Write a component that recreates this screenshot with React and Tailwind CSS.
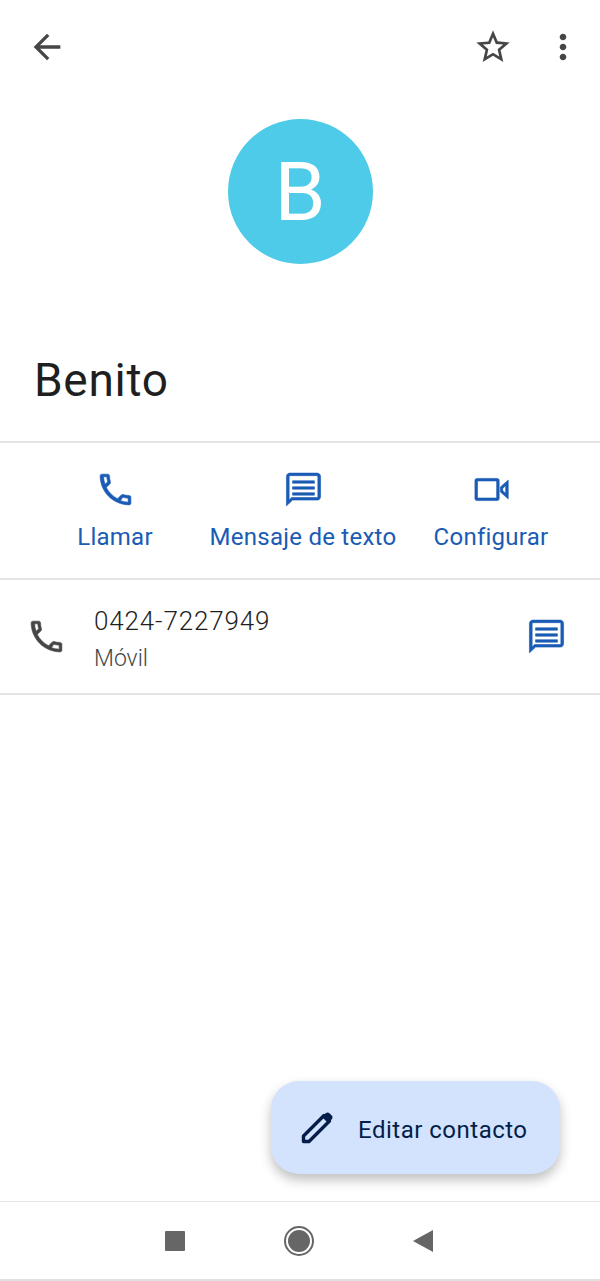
const PHONE = "M6.9 4.6c.06.95.22 1.95.5 2.85l-1.5 1.5c-.5-1.4-.78-2.85-.88-4.35zM16.25 16.6c.95.28 1.95.44 3.15.5v2.3c-1.6-.1-3.05-.38-4.45-.88zM7.5 3H4c-.55 0-1 .45-1 1 0 9.39 7.61 17 17 17 .55 0 1-.45 1-1v-3.49c0-.55-.45-1-1-1-1.24 0-2.45-.2-3.57-.57-.1-.04-.21-.05-.31-.05-.26 0-.51.1-.71.29l-2.2 2.2c-2.83-1.45-5.15-3.76-6.59-6.59l2.2-2.2c.28-.28.36-.67.25-1.02C8.7 6.45 8.5 5.25 8.5 4c0-.55-.45-1-1-1z"
const MESSAGE = "M20 2.4H4C2.9 2.4 2 3.3 2 4.4v17.2l3.6-3.4H20c1.1 0 2-.9 2-2V4.4c0-1.1-.9-2-2-2zm.4 13.8c0 .3-.2.5-.5.5H5l-1.4 1.4V4.4c0-.3.2-.5.5-.5h15.8c.3 0 .5.2.5.5zM5.6 6.9h12.8v1.4H5.6zM5.6 10.4h12.8v1.4H5.6zM5.6 13.9h12.8v1.4H5.6z"
const VIDEO = "M3.5 5.5h11.8c.7 0 1.2.5 1.2 1.2v10.6c0 .7-.5 1.2-1.2 1.2H3.5c-.7 0-1.2-.5-1.2-1.2V6.7c0-.7.5-1.2 1.2-1.2zM3.8 7v10h11.2V7zM21.8 6.5v11l-4.6-4v-3zM20.3 9.8l-1.7 1.4v1.6l1.7 1.4z"

const Icon = ({ d, className, bold }) => (
    <svg viewBox="0 0 24 24" fill="currentColor" fillRule="evenodd" stroke={bold ? "currentColor" : "none"} strokeWidth={bold ? 0.35 : 0} className={className}>
        <path d={d} />
    </svg>
)

const Action = ({ d, label }) => (
    <div className="w-[188px] flex flex-col items-center">
        <Icon d={d} bold className="w-[41px] h-[41px] text-[#1a5bb5]" />
        <span className="mt-[12px] text-[24px] leading-[30px] tracking-[0.25px] text-[#1a5bb5] whitespace-nowrap">{label}</span>
    </div>
)

export default function App() {
    return (
        <div className="h-[1281px] flex flex-col bg-white font-['Roboto',sans-serif] overflow-hidden">

            {/* Top bar */}
            <div className="h-[94px] flex items-center pl-[27px] pr-[17px] text-[#444746] shrink-0">
                <Icon d="M20 11H7.83l5.59-5.59L12 4l-8 8 8 8 1.41-1.41L7.83 13H20v-2z" className="w-[40px] h-[40px]" />
                <div className="ml-auto flex items-center gap-[30px]">
                    <Icon d="M22 9.24l-7.19-.62L12 2 9.19 8.63 2 9.24l5.46 4.73L5.82 21 12 17.27 18.18 21l-1.63-7.03L22 9.24zM12 15.4l-3.76 2.27 1-4.28-3.32-2.88 4.38-.38L12 6.1l1.71 4.04 4.38.38-3.32 2.88 1 4.28L12 15.4z" className="w-[40px] h-[40px]" />
                    <Icon d="M12 8c1.1 0 2-.9 2-2s-.9-2-2-2-2 .9-2 2 .9 2 2 2zm0 2c-1.1 0-2 .9-2 2s.9 2 2 2 2-.9 2-2-.9-2-2-2zm0 6c-1.1 0-2 .9-2 2s.9 2 2 2 2-.9 2-2-.9-2-2-2z" className="w-[40px] h-[40px]" />
                </div>
            </div>

            {/* Avatar */}
            <div className="mt-[25px] flex justify-center shrink-0">
                <div className="w-[145px] h-[145px] rounded-full bg-[#4ecbe8] flex items-center justify-center text-white text-[82px] leading-none font-normal">B</div>
            </div>

            {/* Name */}
            <div className="h-[179px] pl-[34px] pt-[85px] text-[46px] leading-[62px] tracking-[0.7px] text-[#1f1f1f] border-b-2 border-[#e4e4e4] shrink-0">Benito</div>

            {/* Actions */}
            <div className="h-[137px] flex pl-[21px] pt-[26px] border-b-2 border-[#e4e4e0] shrink-0">
                <Action d={PHONE} label="Llamar" />
                <Action d={MESSAGE} label="Mensaje de texto" />
                <Action d={VIDEO} label="Configurar" />
            </div>

            {/* Phone row */}
            <div className="h-[115px] flex items-center pl-[26px] pr-[33px] border-b-2 border-[#e4e4e4] shrink-0">
                <Icon d={PHONE} bold className="w-[41px] h-[41px] text-[#444746]" />
                <div className="ml-[27px] pt-[3px]">
                    <p className="text-[26px] leading-[34px] tracking-[0.85px] font-light text-[#1f1f1f]">0424-7227949</p>
                    <p className="mt-[7px] text-[23px] leading-[28px] font-light text-[#444746]">Móvil</p>
                </div>
                <Icon d={MESSAGE} bold className="ml-auto w-[41px] h-[41px] text-[#1a5bb5]" />
            </div>

            {/* Edit button */}
            <div className="flex-1 flex items-end justify-end pr-[40px] pb-[27px]">
                <div className="w-[289px] h-[93px] rounded-[28px] bg-[#d3e3fd] shadow-[0_6px_12px_rgba(0,0,0,0.25)] flex items-center pl-[26px]">
                    <svg viewBox="0 0 40 40" className="w-[40px] h-[40px] text-[#041e49]" fill="none">
                        <path d="M6.5 33.5V28L27 7.5l5.5 5.5L12 33.5z" stroke="currentColor" strokeWidth="3.4" strokeLinejoin="round" />
                        <path d="M25 9l3.5-3.5a3 3 0 0 1 4.2 0l1.8 1.8a3 3 0 0 1 0 4.2L31 15z" fill="currentColor" />
                    </svg>
                    <span className="ml-[21px] pt-[4px] text-[24px] leading-[32px] tracking-[0.5px] text-[#041e49] whitespace-nowrap">Editar contacto</span>
                </div>
            </div>

            {/* Nav bar */}
            <div className="h-[80px] flex items-center justify-center gap-[99px] pr-[2px] border-t border-[#e8e8e8] border-b-2 border-b-[#e0e0e0] shrink-0">
                <div className="w-[20px] h-[20px] bg-[#666666] rounded-[1px]"></div>
                <div className="w-[30px] h-[30px] rounded-full border-2 border-[#666666] flex items-center justify-center">
                    <div className="w-[22px] h-[22px] rounded-full bg-[#666666]"></div>
                </div>
                <svg viewBox="0 0 20 22" className="w-[20px] h-[22px] text-[#666666]" fill="currentColor">
                    <path d="M20 0v22L0 11z" />
                </svg>
            </div>
        </div>
    )
}
